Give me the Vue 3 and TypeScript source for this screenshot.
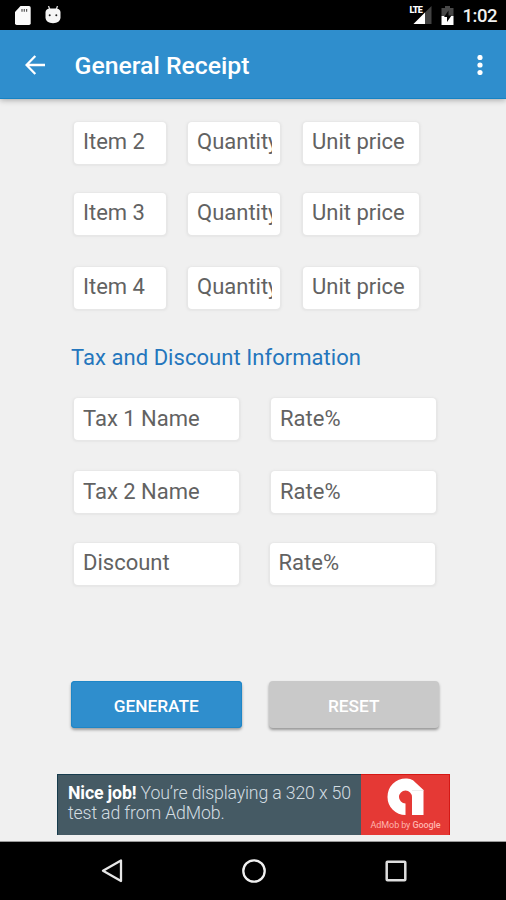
<script setup lang="ts">
interface TaxRow {
  name: string
  rate: string
}

const items: string[] = ['Item 2', 'Item 3', 'Item 4']
const taxes: TaxRow[] = [
  { name: 'Tax 1 Name', rate: 'Rate%' },
  { name: 'Tax 2 Name', rate: 'Rate%' },
  { name: 'Discount', rate: 'Rate%' },
]
</script>

<template>
  <div class="screen">
    <header class="status">
      <svg class="sd" viewBox="0 0 16 19" width="16" height="19">
        <path d="M5.5 0H14a1.7 1.7 0 0 1 1.700 1.700v15.600A1.700 1.700 0 0 1 14 19H1.700A1.700 1.700 0 0 1 0 17.300V6z" fill="#fafafa" />
        <path d="M7 3v2.800M9.300 3v2.800M11.600 3v2.800" stroke="#555" stroke-width="1.200" />
      </svg>
      <svg class="droid" viewBox="0 0 16 18" width="16" height="18">
        <path d="M3.500 0l1.500 4M12.500 0l-1.500 4" stroke="#ddd" stroke-width="1.300" />
        <path d="M.5 6Q1 2.800 5 2.500h6q4 .3 4.500 3.500v6q-.5 5-7.500 5.300Q1 17 .5 12z" fill="#f5f5f5" />
        <circle cx="4.700" cy="9.200" r="1" fill="#222" />
        <circle cx="11.300" cy="9.200" r="1" fill="#222" />
      </svg>
      <div class="signal">
        <svg viewBox="0 0 20 20" width="20" height="20">
          <path d="M18.500 1v18H.5z" fill="#424242" />
          <path d="M12 7.500V19H.5z" fill="#fff" />
        </svg>
        <span class="lte">LTE</span>
      </div>
      <svg class="battery" viewBox="0 0 13 19" width="13" height="19">
        <path d="M4 0h5v2h3.500v8H.5V2H4z" fill="#484848" />
        <path d="M.5 10h12v9H.5z" fill="#fff" />
        <path d="M7.500 4.500L3 11h3v5l4.500-6.500h-3z" fill="#050505" />
      </svg>
      <span class="clock">1:02</span>
    </header>

    <div class="appbar">
      <svg class="back" viewBox="0 0 20 20" width="20" height="20">
        <path d="M10.300 1L1.500 10l8.800 9M1.500 10H20" fill="none" stroke="#fff" stroke-width="2.300" />
      </svg>
      <h1>General Receipt</h1>
      <svg class="more" viewBox="0 0 6 20" width="6" height="20">
        <circle cx="3" cy="2.500" r="2.600" fill="#fff" />
        <circle cx="3" cy="10" r="2.600" fill="#fff" />
        <circle cx="3" cy="17.500" r="2.600" fill="#fff" />
      </svg>
    </div>

    <main>
      <div class="items">
        <div v-for="item in items" :key="item" class="row">
          <div class="field narrow"><span>{{ item }}</span></div>
          <div class="field narrow"><span>Quantity</span></div>
          <div class="field price"><span>Unit price</span></div>
        </div>
      </div>
      <h2>Tax and Discount Information</h2>
      <div class="taxes">
        <div v-for="tax in taxes" :key="tax.name" class="row">
          <div class="field wide"><span>{{ tax.name }}</span></div>
          <div class="field wide"><span>{{ tax.rate }}</span></div>
        </div>
      </div>
      <div class="actions">
        <button class="generate" type="button">GENERATE</button>
        <button class="reset" type="button">RESET</button>
      </div>
      <div class="ad">
        <p><b>Nice job!</b> You’re displaying a 320 x 50<br />test ad from AdMob.</p>
        <div class="brand">
          <svg viewBox="0 0 38 38" width="38" height="38">
            <path d="M19 .5Q23 .2 26 2.200L36.500 12v25H25V19a6.500 6.500 0 1 0-6.500 6.500V37A18 18 0 0 1 .5 19 18.200 18.200 0 0 1 19 .5z" fill="#fff" />
            <path d="M25 12.500h11.500" stroke="#e5e5e5" stroke-width=".7" />
          </svg>
          <span class="by">AdMob by <b>Google</b></span>
        </div>
      </div>
    </main>

    <nav>
      <svg viewBox="0 0 22 24" width="22" height="24">
        <path d="M20 1.500v20.500L2 11.700z" fill="none" stroke="#e6e6e6" stroke-width="2.300" stroke-linejoin="round" />
      </svg>
      <svg viewBox="0 0 24 24" width="24" height="24">
        <circle cx="12" cy="12" r="10.700" fill="none" stroke="#f0f0f0" stroke-width="2.300" />
      </svg>
      <svg viewBox="0 0 22 22" width="22" height="22">
        <rect x="1.700" y="1.700" width="18.600" height="18.600" rx=".8" fill="none" stroke="#dedede" stroke-width="2.500" />
      </svg>
    </nav>
  </div>
</template>

<style>
body {
  margin: 0;
  background: #f0f0f0;
}
</style>

<style scoped>
.screen {
  width: 506px;
  height: 900px;
  display: flex;
  flex-direction: column;
  overflow: hidden;
  background: #f0f0f0;
  font-family: Roboto, "Liberation Sans", sans-serif;
}
.status {
  height: 30px;
  flex: none;
  display: flex;
  align-items: flex-start;
  box-sizing: border-box;
  padding: 6px 9px 0 15px;
  background: #000;
  color: #f0f0f0;
}
.droid { margin-left: 13.5px; }
.signal {
  position: relative;
  margin-left: auto;
  width: 20px;
  height: 20px;
  margin-top: -1px;
}
.lte {
  position: absolute;
  left: -3px;
  top: 1px;
  font-size: 9px;
  line-height: 9px;
  font-weight: 900;
  letter-spacing: -0.8px;
  color: #fff;
  background: #000;
}
.battery { margin: 0 9px 0 8px; }
.clock {
  font-size: 18.5px;
  line-height: 20px;
  font-weight: 500;
  letter-spacing: -0.5px;
}
.appbar {
  height: 69px;
  flex: none;
  display: flex;
  align-items: center;
  box-sizing: border-box;
  padding: 0 23.5px 0 25px;
  background: #2f8ecd;
  box-shadow: inset 0 -1px #1683c4, 0 1px 6px rgba(0, 0, 0, 0.32);
  z-index: 1;
}
h1 {
  flex: 1;
  margin: 3px 0 0 29.5px;
  color: #fff;
  font-size: 24.8px;
  line-height: 30px;
  font-weight: 500;
}
main {
  flex: 1;
  display: flex;
  flex-direction: column;
  border-bottom: 1px solid #999;
}
.row { display: flex; }
.items {
  display: grid;
  grid-auto-rows: 42px;
  padding: 22.5px 0 0 74px;
  row-gap: 29.500px;
}
.items .row { gap: 22.5px; }
.items .row:last-child { margin-top: 2px; }
.field {
  height: 42px;
  box-sizing: border-box;
  padding: 0 8px 0 9px;
  border-radius: 4px;
  background: #fff;
  box-shadow: 0 0.5px 2px 1.500px #e6e6e6;
  color: #626262;
  font-size: 22px;
  line-height: 40px;
  white-space: nowrap;
}
.field span {
  display: block;
  overflow: hidden;
}
.narrow { width: 91.500px; }
.price {
  width: 116px;
  margin-left: 1px;
}
h2 {
  margin: 37px 0 0 71px;
  height: 28px;
  color: #2476bd;
  font-size: 22px;
  line-height: 28px;
  font-weight: 400;
  letter-spacing: 0.05px;
}
.taxes {
  display: grid;
  grid-auto-rows: 42px;
  row-gap: 31px;
  padding: 26.5px 0 0 74px;
}
.taxes .row { gap: 32px; }
.taxes .field { line-height: 42px; }
.taxes .row:last-child {
  gap: 30.5px;
  margin-top: -1px;
}
.taxes .row:last-child .field { line-height: 40px; }
.wide { width: 165px; }
.actions {
  display: flex;
  gap: 27px;
  padding: 95px 0 0 71px;
}
button {
  width: 170.500px;
  height: 47px;
  padding: 2px 0 0;
  border: 0;
  border-radius: 4px;
  color: #fff;
  font-family: inherit;
  font-size: 17.3px;
  font-weight: 500;
}
.generate {
  background: #2f8ecd;
  box-shadow: inset 0 0 0 1px #1e86c7, 0 2px 3px rgba(0, 0, 0, 0.35);
}
.reset {
  background: #c9c9c9;
  box-shadow: 0 2px 3px rgba(0, 0, 0, 0.38);
}
.ad {
  display: flex;
  width: 393px;
  height: 61px;
  box-sizing: border-box;
  margin: 45.5px 0 0 57px;
  background: #455a64;
  box-shadow: inset 1px 1px #173c4d;
}
.ad p {
  width: 304px;
  box-sizing: border-box;
  margin: 0;
  padding: 9px 0 0 11px;
  color: #d3dde2;
  font-size: 17.7px;
  line-height: 20.5px;
  font-weight: 300;
  letter-spacing: -0.14px;
  white-space: nowrap;
}
.ad p b {
  color: #fff;
  font-weight: 700;
}
.brand {
  flex: 1;
  display: flex;
  flex-direction: column;
  align-items: center;
  padding-top: 4px;
  background: #e53935;
  box-shadow: inset -1px 1px #d51815;
}
.by {
  margin-top: 3px;
  color: #ffb4ae;
  font-size: 9px;
  line-height: 12px;
  letter-spacing: -0.1px;
  white-space: nowrap;
}
.by b { font-weight: 500; }
nav {
  height: 58px;
  flex: none;
  display: flex;
  align-items: center;
  justify-content: space-between;
  box-sizing: border-box;
  padding: 0 99px 0 101px;
  background: #000;
}
</style>
